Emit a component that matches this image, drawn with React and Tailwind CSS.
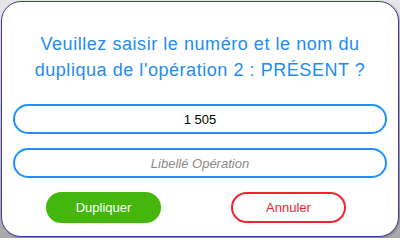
export default function App() {
  return (
    <div
      className="w-[400px] h-[238px] p-px bg-gradient-to-b from-[#e6e6e6] to-[#a9a9a9]"
      style={{ fontFamily: '"Liberation Sans", Arial, sans-serif' }}
    >
      <div className="h-full rounded-[20px] border border-[#3d3d9e] bg-white px-[11px] pt-[29px] shadow-[1px_1px_2px_rgba(0,0,0,0.25)]">
        <p className="text-center text-[18px] leading-[26px] tracking-[0.55px] text-[#1e8cf0]">
          Veuillez saisir le numéro et le nom du
          <br />
          dupliqua de l'opération 2 : PRÉSENT ?
        </p>

        <div className="mt-[21px] flex flex-col gap-[14px]">
          <input
            defaultValue="1 505"
            className="h-[30px] w-full rounded-full border-2 border-[#1e90ff] bg-white text-center text-[13px] text-black outline-none"
          />
          <input
            placeholder="Libellé Opération"
            className="h-[30px] w-full rounded-full border-2 border-[#1e90ff] bg-white text-center text-[13px] italic text-black outline-none placeholder:text-[#8a8a8a]"
          />
        </div>

        <div className="mt-[14px] flex gap-[70px] pl-[33px]">
          <button className="h-[31px] w-[115px] rounded-full bg-[#44b60e] text-[13px] text-white">
            Dupliquer
          </button>
          <button className="h-[31px] w-[115px] rounded-full border-2 border-[#f5222d] bg-white text-[13px] text-[#f5222d]">
            Annuler
          </button>
        </div>
      </div>
    </div>
  );
}
